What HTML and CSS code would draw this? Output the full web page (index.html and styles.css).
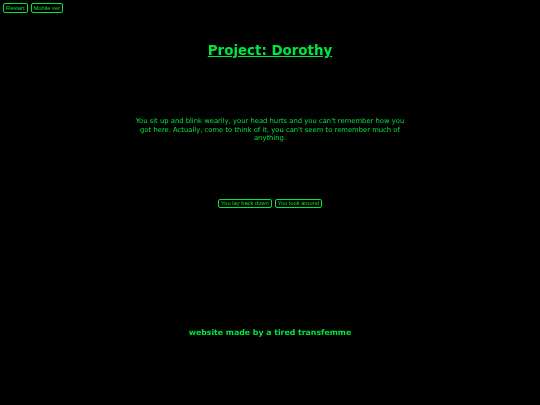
FILE: index.html
```html
<!DOCTYPE html>
<html lang="en">
<head>
<meta charset="utf-8">
<title>Project: Dorothy</title>
<link rel="stylesheet" href="styles.css">
</head>
<body>
<div class="page">
<nav class="top"><button class="btn">Restart</button><button class="btn">Mobile ver</button></nav>
<h1 class="title">Project: Dorothy</h1>
<p class="story">You sit up and blink wearily, your head hurts and you can't remember how you got here. Actually, come to think of it, you can't seem to remember much of anything.</p>
<div class="choices"><button class="btn">You lay back down</button><button class="btn">You look around</button></div>
<footer class="foot">website made by a tired transfemme</footer>
</div>
</body>
</html>
```
FILE: styles.css
```css
html, body { margin: 0; padding: 0; height: 405px; overflow: hidden; background: #000; }
body { font-family: "DejaVu Sans", sans-serif; color: #00e640; }
.page { height: 405px; filter: blur(0.3px); }
.top { display: flex; gap: 3px; padding: 3px 3px 0; height: 10px; }
.btn {
  font-family: "Liberation Sans", sans-serif; font-size: 5.75px; line-height: 7px;
  color: #00e640; background: #000; border: 1px solid #00e640; border-radius: 2px;
  padding: 0 2px; height: 9px; box-sizing: border-box; margin: 0;
}
.top .btn { height: 10px; }
.title { margin: 29px 0 0; text-align: center; font-size: 13.4px; line-height: 17px; font-weight: bold; text-decoration: underline; }
.story { width: 272px; margin: 58px auto 0; text-align: center; font-size: 6.8px; line-height: 8.5px; }
.choices { display: flex; justify-content: center; gap: 3px; margin-top: 56px; }
.foot { margin-top: 120px; text-align: center; font-size: 7.8px; line-height: 10px; font-weight: bold; }
```
